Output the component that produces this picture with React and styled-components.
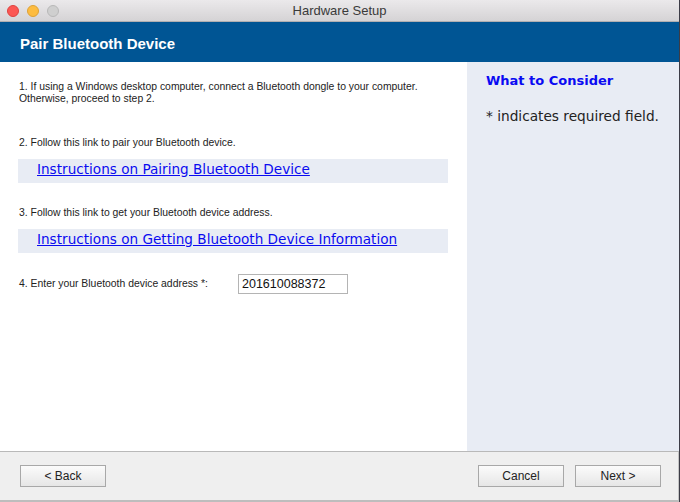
import React from "react";
import styled, { createGlobalStyle } from "styled-components";

const GlobalStyle = createGlobalStyle`
  html, body {
    margin: 0;
    padding: 0;
    background: #3c3c46;
  }
  * {
    box-sizing: border-box;
  }
`;

export default function App() {
  return (
    <>
      <GlobalStyle />
      <Window>
        <TitleBar>
          <Lights>
            <Light color="#fc5753" edge="#de4340" />
            <Light color="#fdbc40" edge="#dea236" />
            <Light color="#cfcfcf" edge="#b8b8b8" />
          </Lights>
          <WindowTitle>Hardware Setup</WindowTitle>
        </TitleBar>

        <Header>Pair Bluetooth Device</Header>

        <Main>
          <LeftPane>
            <StepText>
              1. If using a Windows desktop computer, connect a Bluetooth dongle to your computer.
              <br />
              Otherwise, proceed to step 2.
            </StepText>

            <StepText gap={32}>2. Follow this link to pair your Bluetooth device.</StepText>
            <LinkBox>
              <LinkText href="#">Instructions on Pairing Bluetooth Device</LinkText>
            </LinkBox>

            <StepText gap={24}>3. Follow this link to get your Bluetooth device address.</StepText>
            <LinkBox>
              <LinkText href="#">Instructions on Getting Bluetooth Device Information</LinkText>
            </LinkBox>

            <AddressRow>
              <AddressLabel>4. Enter your Bluetooth device address *:</AddressLabel>
              <AddressInput defaultValue="201610088372" />
            </AddressRow>
          </LeftPane>

          <RightPane>
            <ConsiderTitle>What to Consider</ConsiderTitle>
            <ConsiderText>* indicates required field.</ConsiderText>
          </RightPane>
        </Main>

        <Footer>
          <Button>&lt; Back</Button>
          <FooterRight>
            <Button>Cancel</Button>
            <Button>Next &gt;</Button>
          </FooterRight>
        </Footer>
      </Window>
    </>
  );
}

const Window = styled.div`
  width: 679px;
  height: 502px;
  display: flex;
  flex-direction: column;
  background: #ffffff;
  overflow: hidden;
`;

const TitleBar = styled.div`
  position: relative;
  height: 22px;
  flex-shrink: 0;
  display: flex;
  align-items: center;
  justify-content: center;
  background: linear-gradient(#ebe9eb, #d5d3d5);
  border-bottom: 1px solid #b1afb1;
`;

const Lights = styled.div`
  position: absolute;
  left: 7px;
  top: 5px;
  display: flex;
  gap: 8px;
`;

const Light = styled.span`
  width: 12px;
  height: 12px;
  border-radius: 50%;
  background: ${({ color }) => color};
  border: 1px solid ${({ edge }) => edge};
`;

const WindowTitle = styled.div`
  font-family: "Liberation Sans", Arial, sans-serif;
  font-size: 13px;
  color: #3a3a3a;
`;

const Header = styled.div`
  height: 40px;
  flex-shrink: 0;
  display: flex;
  align-items: center;
  padding-left: 20px;
  padding-top: 2px;
  background: #005594;
  color: #ffffff;
  font-family: "Liberation Sans", Arial, sans-serif;
  font-weight: 700;
  font-size: 15px;
`;

const Main = styled.div`
  flex: 1;
  display: flex;
  min-height: 0;
`;

const LeftPane = styled.div`
  flex: 1;
  padding: 19px 0 0 19px;
  display: flex;
  flex-direction: column;
  align-items: flex-start;
`;

const StepText = styled.div`
  margin-top: ${({ gap }) => gap || 0}px;
  font-family: "Liberation Sans", Arial, sans-serif;
  font-size: 10.4px;
  line-height: 12px;
  color: #222222;
`;

const LinkBox = styled.div`
  margin: 10px 0 0 -1px;
  width: 430px;
  height: 24px;
  display: flex;
  align-items: center;
  padding-left: 19px;
  padding-bottom: 5px;
  background: #e8ecf4;
`;

const LinkText = styled.a`
  font-family: "DejaVu Sans", Verdana, sans-serif;
  font-size: 13.6px;
  color: #0b0bf0;
  text-decoration: underline;
`;

const AddressRow = styled.div`
  margin-top: 21px;
  display: flex;
  align-items: center;
`;

const AddressLabel = styled(StepText)`
  width: 219px;
`;

const AddressInput = styled.input`
  width: 110px;
  height: 20px;
  padding: 0 0 0 3px;
  border: 1px solid #b4b4b4;
  font-family: "Liberation Sans", Arial, sans-serif;
  font-size: 12.5px;
  color: #111111;
  outline: none;
`;

const RightPane = styled.div`
  width: 212px;
  flex-shrink: 0;
  padding: 11px 0 0 19px;
  background: #e8ecf4;
  font-family: "DejaVu Sans", Verdana, sans-serif;
`;

const ConsiderTitle = styled.div`
  font-size: 13px;
  font-weight: 700;
  color: #0a0af2;
  line-height: 16px;
`;

const ConsiderText = styled.div`
  margin-top: 19px;
  font-size: 13.7px;
  color: #222222;
  line-height: 16px;
`;

const Footer = styled.div`
  height: 51px;
  flex-shrink: 0;
  display: flex;
  justify-content: space-between;
  align-items: flex-start;
  padding: 13px 17px 0 20px;
  background: #efefef;
  border-top: 1px solid #b9b9b9;
  border-bottom: 2px solid #bdbdbd;
  border-right: 1px solid #c4c4c4;
`;

const FooterRight = styled.div`
  display: flex;
  gap: 11px;
`;

const Button = styled.button`
  width: 86px;
  height: 22px;
  padding: 0;
  border: 1px solid #a8a8a8;
  border-radius: 0;
  background: linear-gradient(#fbfbfb, #e6e6e6);
  font-family: "Liberation Sans", Arial, sans-serif;
  font-size: 12px;
  color: #222222;
`;
